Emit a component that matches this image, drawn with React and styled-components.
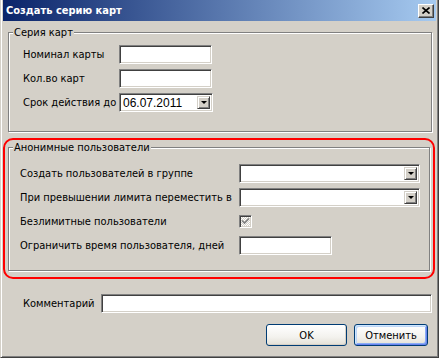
import React from "react";
import styled, { createGlobalStyle } from "styled-components";

const GlobalStyle = createGlobalStyle`
  html, body {
    margin: 0;
    padding: 0;
    background: #d4d0c8;
  }
  body {
    font-family: "DejaVu Sans Condensed", "DejaVu Sans", sans-serif;
    font-stretch: condensed;
    font-size: 11px;
    color: #000;
  }
`;

const Window = styled.div`
  box-sizing: border-box;
  width: 439px;
  height: 358px;
  background: #d4d0c8;
  border-left: 1px solid #d4d0c8;
  border-right: 1px solid #404040;
  border-bottom: 1px solid #404040;
  box-shadow: inset 1px 0 0 #fff, inset -1px -1px 0 #808080;
  padding: 0 2px 2px 2px;
  display: flex;
  flex-direction: column;
`;

const TitleBar = styled.div`
  height: 21px;
  display: flex;
  align-items: center;
  justify-content: space-between;
  padding: 0 2px 0 2px;
  background: linear-gradient(to right, #0a246a, #a6caf0);
  color: #fff;
  font-weight: bold;
  font-size: 11px;
`;

const TitleText = styled.span`
  padding-left: 1px;
`;

const CloseButton = styled.div`
  box-sizing: border-box;
  width: 16px;
  height: 14px;
  background: #d4d0c8;
  border-top: 1px solid #fff;
  border-left: 1px solid #fff;
  border-right: 1px solid #404040;
  border-bottom: 1px solid #404040;
  box-shadow: inset -1px -1px 0 #808080;
  display: flex;
  align-items: center;
  justify-content: center;
`;

const Body = styled.div`
  display: flex;
  flex-direction: column;
  padding: 5px 4px 0 5px;
`;

const Group = styled.fieldset`
  margin: 0;
  padding: 0;
  border: 1px solid #808080;
  box-shadow: inset 1px 1px 0 #fff, 1px 1px 0 #fff;
  min-width: 0;
`;

const Legend = styled.legend`
  margin-left: 4px;
  padding: 0 1px;
  line-height: 13px;
  background: #d4d0c8;
`;

const FormGrid = styled.div`
  display: grid;
  grid-template-columns: ${(p) => p.$labelWidth}px auto;
  grid-auto-rows: 19px;
  row-gap: 5px;
  align-items: center;
  padding: ${(p) => p.$pad};
`;

const Label = styled.span`
  white-space: nowrap;
`;

const TextBox = styled.div`
  box-sizing: border-box;
  width: ${(p) => p.$w}px;
  height: 19px;
  background: #fff;
  border-top: 1px solid #808080;
  border-left: 1px solid #808080;
  border-right: 1px solid #fff;
  border-bottom: 1px solid #fff;
  box-shadow: inset 1px 1px 0 #404040, inset -1px -1px 0 #d4d0c8;
  display: flex;
  align-items: center;
  padding-left: 3px;
  font-family: "Liberation Sans", sans-serif;
  font-size: 12px;
`;

const Combo = styled(TextBox)`
  padding: 2px 2px 2px 3px;
`;

const DropButton = styled.div`
  box-sizing: border-box;
  width: 13px;
  height: 100%;
  margin-left: auto;
  background: #d4d0c8;
  border-top: 1px solid #d4d0c8;
  border-left: 1px solid #d4d0c8;
  border-right: 1px solid #404040;
  border-bottom: 1px solid #404040;
  box-shadow: inset 1px 1px 0 #fff, inset -1px -1px 0 #808080;
  display: flex;
  align-items: center;
  justify-content: center;

  &::after {
    content: "";
    border-left: 3px solid transparent;
    border-right: 3px solid transparent;
    border-top: 3px solid #000;
    margin-left: 1px;
  }
`;

const CheckBox = styled.div`
  box-sizing: border-box;
  width: 13px;
  height: 13px;
  border-top: 1px solid #808080;
  border-left: 1px solid #808080;
  border-right: 1px solid #fff;
  border-bottom: 1px solid #fff;
  box-shadow: inset 1px 1px 0 #404040, inset -1px -1px 0 #d4d0c8;
  background-color: #fff;
  background-image: repeating-conic-gradient(#d4d0c8 0 25%, #fff 0 50%);
  background-size: 2px 2px;
  display: flex;
  align-items: center;
  justify-content: center;
`;

const Highlight = styled.div`
  margin: 6px -3px 0 -5px;
  border: 2px solid #ff0000;
  border-radius: 10px;
  padding: 1px 3px 6px 3px;
`;

const CommentRow = styled.div`
  display: flex;
  align-items: center;
  margin-top: 15px;
  padding-left: 15px;
`;

const CommentLabel = styled.span`
  width: 79px;
`;

const Buttons = styled.div`
  display: flex;
  justify-content: flex-end;
  gap: 7px;
  margin-top: 11px;
  padding-right: 4px;
`;

const Button = styled.button`
  box-sizing: border-box;
  width: ${(p) => p.$w}px;
  height: 22px;
  font: inherit;
  color: #000;
  border: 1px solid #003c74;
  border-radius: 3px;
  background: linear-gradient(#ffffff, #f3f2ee 60%, #e3e0d6);
  box-shadow: ${(p) =>
    p.$focused
      ? "inset 1px 1px 0 #cee7ff, inset -1px -1px 0 #6982ee, inset 2px 2px 0 #bcd4f6, inset -2px -2px 0 #89adf4"
      : "inset -1px -1px 0 #d6d0c5"};
  padding: 0;
`;

const Check = () => (
  <svg width="9" height="9" viewBox="0 0 9 9">
    <path d="M1 3.5 L3.5 6 L8 1.5" fill="none" stroke="#808080" strokeWidth="1.6" />
  </svg>
);

const CloseX = () => (
  <svg width="8" height="7" viewBox="0 0 8 7">
    <path d="M0.5 0.5 L7.5 6.5 M7.5 0.5 L0.5 6.5" stroke="#000" strokeWidth="1.6" />
  </svg>
);

export default function App() {
  return (
    <>
      <GlobalStyle />
      <Window>
        <TitleBar>
          <TitleText>Создать серию карт</TitleText>
          <CloseButton>
            <CloseX />
          </CloseButton>
        </TitleBar>
        <Body>
          <Group>
            <Legend>Серия карт</Legend>
            <FormGrid $labelWidth={96} $pad="6px 0 19px 14px">
              <Label>Номинал карты</Label>
              <TextBox $w={93} />
              <Label>Кол.во карт</Label>
              <TextBox $w={93} />
              <Label>Срок действия до</Label>
              <Combo $w={94}>
                06.07.2011
                <DropButton />
              </Combo>
            </FormGrid>
          </Group>
          <Highlight>
            <Group>
              <Legend>Анонимные пользователи</Legend>
              <FormGrid $labelWidth={219} $pad="10px 0 15px 11px">
                <Label>Создать пользователей в группе</Label>
                <Combo $w={181}>
                  <DropButton />
                </Combo>
                <Label>При превышении лимита переместить в</Label>
                <Combo $w={181}>
                  <DropButton />
                </Combo>
                <Label>Безлимитные пользователи</Label>
                <CheckBox>
                  <Check />
                </CheckBox>
                <Label>Ограничить время пользователя, дней</Label>
                <TextBox $w={93} />
              </FormGrid>
            </Group>
          </Highlight>
          <CommentRow>
            <CommentLabel>Комментарий</CommentLabel>
            <TextBox $w={333} />
          </CommentRow>
          <Buttons>
            <Button $w={81}>OK</Button>
            <Button $w={74} $focused>
              Отменить
            </Button>
          </Buttons>
        </Body>
      </Window>
    </>
  );
}
